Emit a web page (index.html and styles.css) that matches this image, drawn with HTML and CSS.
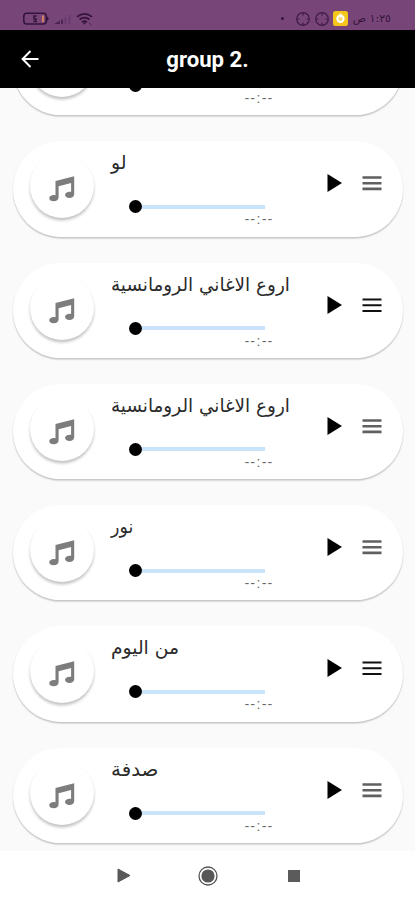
FILE: index.html
```html
<!DOCTYPE html>
<html lang="ar">
<head>
<meta charset="utf-8">
<title>group 2.</title>
<link rel="stylesheet" href="styles.css">
</head>
<body>
<svg class="defs" aria-hidden="true">
  <symbol id="note" viewBox="0 0 26 26"><path fill="#7d7d7d" d="M6.500 5 25.200.2V18.200c0 2.400-2.200 3.700-4.700 3.700-2.600 0-4.500-1.200-4.500-3.100 0-2.100 2.800-3.600 6.100-3V6.900L9.600 10.300V21.300c0 2.500-2.200 4-4.800 4C2.200 25.300.2 24.100.2 22.300c0-2.200 2.600-3.700 6.300-3.100z"/></symbol>
  <symbol id="play" viewBox="0 0 15 18"><path d="M.5 0 15 9 .5 18z"/></symbol>
  <symbol id="menu" viewBox="0 0 20 15"><path d="M.5 1.500h19M.5 7.200h19M.5 12.900h19" fill="none" stroke="currentColor"/></symbol>
  <symbol id="target" viewBox="0 0 16 16"><g fill="none" stroke="#401b48" stroke-width="1.200"><circle cx="8" cy="8" r="6.300"/><path d="M8 2v2.500M8 11.500V14M2 8h2.500M11.500 8H14"/></g></symbol>
</svg>
<div class="status">
  <svg class="status-left" viewBox="0 0 72 16" width="72" height="16">
    <rect x="1.800" y="2.300" width="22.500" height="10.700" rx="3" fill="none" stroke="#35143c" stroke-width="1.600"/>
    <path d="M25 5.500v4.500l2-2.200z" fill="#35143c"/>
    <path d="M20 4.500h2v6.500h-2z" fill="#d08263"/>
    <path d="M14.500 5h-2.500v3h2v2.500h-2.500" fill="none" stroke="#35143c" stroke-width="1.500"/>
    <path d="M32 13l6-3.500V13zM39 13V8.500h2V13z" fill="#4d2553"/>
    <path d="M43.500 13V6M47.500 13V4" stroke="#653669" stroke-width="1.400"/>
    <g fill="none" stroke="#35143c" stroke-width="1.700"><path d="M55 5.800q7.500-6 15 0M57.500 8.500q5-3.800 10 0M60 11q2.500-1.800 5 0"/></g>
    <path d="M61 11.500h3L62.500 13.500zM67 12l2.500 2" fill="#35143c" stroke="#4d2553"/>
  </svg>
  <div class="status-right">
    <i class="dot"></i>
    <svg class="target" width="16" height="16"><use href="#target"/></svg>
    <svg class="target" width="16" height="16"><use href="#target"/></svg>
    <svg class="app" viewBox="0 0 15 15" width="15" height="15"><rect width="15" height="15" rx="2.500" fill="#f5c71d"/><circle cx="7.500" cy="7.800" r="3.200" fill="#f6da75" stroke="#fff" stroke-width="2"/><path d="M7.500 2.500v4" stroke="#fff" stroke-width="1.500"/></svg>
    <span class="clock" dir="rtl">١:٢٥ ص</span>
  </div>
</div>
<header class="bar">
  <svg class="back" viewBox="0 0 18 18" width="18" height="18"><path d="M9.500 1 1.600 9l7.900 8M1.600 9H17.500" fill="none" stroke="#fff" stroke-width="2"/></svg>
  <h1>group 2.</h1>
</header>
<main class="viewport"><div class="list" id="list"></div></main>
<nav class="nav">
  <svg width="14" height="15" viewBox="0 0 14 15"><path d="M1 1 13 7.500 1 14z" fill="#585858" stroke="#585858"/></svg>
  <svg width="20" height="20" viewBox="0 0 20 20"><circle cx="10" cy="10" r="9" fill="none" stroke="#555" stroke-width="1.300"/><circle cx="10" cy="10" r="6.600" fill="#585858"/></svg>
  <svg width="12" height="12"><rect width="12" height="12" fill="#5b5b5b"/></svg>
</nav>
<script src="list.js"></script>
</body>
</html>
```
FILE: styles.css
```css
* { box-sizing: border-box; }
body { margin: 0; width: 415px; height: 900px; overflow: hidden; background: #fff; font-family: Roboto, "Noto Sans", "DejaVu Sans", sans-serif; display: flex; flex-direction: column; }
svg { display: block; flex: none; }
.defs { display: none; }
.status { height: 30px; flex: none; background: #774578; display: flex; justify-content: space-between; padding: 11px 24px 0 22px; }
.status-right { display: flex; align-items: flex-start; }
.dot { width: 3px; height: 3px; border-radius: 50%; background: #35143c; margin: 6px 11px 0 0; }
.target { margin-right: 3px; }
.app { margin-right: 5px; }
.clock { font: 11px/15px "DejaVu Sans", sans-serif; color: #35143c; white-space: nowrap; width: 38px; }
.bar { height: 58px; flex: none; background: #000; display: grid; grid-template-columns: 60px 1fr 60px; align-items: center; }
.back { margin-left: 21px; }
.bar h1 { margin: 0; color: #fff; font: bold 22.200px/30px Roboto, sans-serif; text-align: center; }
.viewport { height: 763px; flex: none; overflow: hidden; background: #fafafa; }
.list { margin-top: -68px; padding: 0 12px 0 13px; display: flex; flex-direction: column; gap: 26px; }
.card { height: 95.300px; flex: none; border-radius: 48px; background: #fff; box-shadow: 0 1.500px 1.500px rgba(0,0,0,.22); display: flex; padding-left: 17px; }
.disc { width: 64px; height: 64px; margin-top: 13px; border-radius: 50%; background: #fff; box-shadow: 0 2.500px 3px rgba(0,0,0,.24); padding: 22px 0 0 19px; flex: none; }
.info { width: 180px; margin-left: 17px; padding-top: 8px; flex: none; }
.title { height: 27px; font: 19px/27px "DejaVu Sans", sans-serif; color: #2b2b2b; white-space: nowrap; direction: rtl; display: block; width: max-content; transform-origin: left center; }
.slider { margin: 24px 0 0 18px; width: 136px; height: 13px; display: flex; align-items: center; }
.knob { width: 13px; height: 13px; border-radius: 50%; background: #000; flex: none; }
.track { height: 4px; flex: 1; background: #c9e3fb; }
.time { display: block; margin: 0 0 0 134px; width: 32px; font: 14px/12px Roboto, sans-serif; color: #666; white-space: nowrap; letter-spacing: 2px; }
.play { margin: 33px 0 0 36px; }
.menu { margin: 35px 0 0 20px; color: #606060; stroke-width: 2.600px; }
.menu.dark { color: #111; stroke-width: 2px; }
.nav { flex: 1; background: #fff; display: flex; align-items: center; padding-left: 117px; }
.nav svg:nth-child(2) { margin-left: 67px; }
.nav svg:nth-child(3) { margin-left: 70px; }
```
FILE: list.js
```js
const songs = [
  { title: "", width: 0 },
  { title: "لو", width: 16 },
  { title: "اروع الاغاني الرومانسية", width: 179, dark: true },
  { title: "اروع الاغاني الرومانسية", width: 179 },
  { title: "نور", width: 22 },
  { title: "من اليوم", width: 68, dark: true },
  { title: "صدفة", width: 47 }
];
const list = document.getElementById("list");
for (const song of songs) {
  const card = document.createElement("article");
  card.className = "card";
  card.innerHTML = `
    <div class="disc"><svg width="26" height="26"><use href="#note"/></svg></div>
    <div class="info">
      <span class="title">${song.title}</span>
      <div class="slider"><i class="knob"></i><i class="track"></i></div>
      <span class="time">--:--</span>
    </div>
    <svg class="play" width="15" height="18"><use href="#play"/></svg>
    <svg class="menu ${song.dark ? "dark" : ""}" width="20" height="15"><use href="#menu"/></svg>`;
  list.append(card);
  const title = card.querySelector(".title");
  if (song.width) title.style.transform = `scaleX(${song.width / title.offsetWidth})`;
}
```
